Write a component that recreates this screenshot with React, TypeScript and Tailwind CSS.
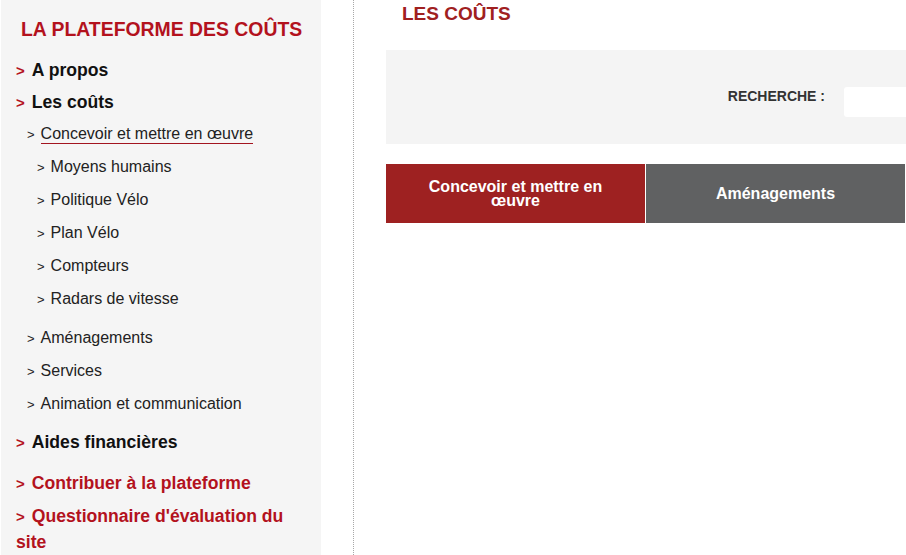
import React from 'react';

const subItems = ['Moyens humains', 'Politique Vélo', 'Plan Vélo', 'Compteurs', 'Radars de vitesse'];
const sections = ['Aménagements', 'Services', 'Animation et communication'];

function Arrow({ bold = false, red = false }: { bold?: boolean; red?: boolean }) {
  return (
    <span className={`${bold ? 'text-[15px] font-bold mr-[7px]' : 'text-[13px] mr-[6px]'} ${red ? 'text-[#b3121d]' : 'text-[#222]'} leading-none`}>
      &gt;
    </span>
  );
}

export default function App() {
  return (
    <div className="flex h-[555px] w-[906px] overflow-hidden bg-white font-['Liberation_Sans',Arial,sans-serif]">
      {/* Sidebar */}
      <aside className="ml-px w-[320px] shrink-0 bg-[#f5f5f5] pr-[20px]">
        <h2 className="whitespace-nowrap pt-[17px] pl-[20px] text-[19.4px] font-bold leading-[24px] text-[#b3121d]">
          LA PLATEFORME DES COÛTS
        </h2>

        <ul className="mt-[13px]">
          <li className="pl-[15px] text-[17.6px] font-bold leading-[32px] text-[#111]">
            <Arrow bold red />A propos
          </li>
          <li className="pl-[15px] text-[17.6px] font-bold leading-[32px] text-[#111]">
            <Arrow bold red />Les coûts
          </li>
          <li className="pl-[26px] text-[16px] leading-[32px] text-[#222]">
            <Arrow />
            <span className="border-b border-[#a3141f] pb-px">Concevoir et mettre en œuvre</span>
          </li>
          {subItems.map((item) => (
            <li key={item} className="pl-[36px] text-[16px] leading-[33px] text-[#222]">
              <Arrow />
              {item}
            </li>
          ))}
          <li className="mt-[6px]">
            <ul>
              {sections.map((item) => (
                <li key={item} className="pl-[26px] text-[16px] leading-[33px] text-[#222]">
                  <Arrow />
                  {item}
                </li>
              ))}
            </ul>
          </li>
          <li className="mt-[6px] pl-[15px] text-[17.6px] font-bold leading-[32px] text-[#111]">
            <Arrow bold red />Aides financières
          </li>
          <li className="mt-[9px] pl-[15px] text-[17.6px] font-bold leading-[32px] text-[#b3121d]">
            <Arrow bold red />Contribuer à la plateforme
          </li>
          <li className="mt-[4px] pl-[15px] text-[17.6px] font-bold leading-[26px] text-[#b3121d]">
            <Arrow bold red />Questionnaire d'évaluation du site
          </li>
        </ul>
      </aside>

      {/* Main */}
      <main className="ml-[32px] shrink-0 border-l border-dotted border-[#a8a8a8] pl-[32px]">
        <div className="w-[779px]">
          <h1 className="mt-[2px] pl-[16px] text-[19px] font-bold leading-[24px] text-[#a0201f]">LES COÛTS</h1>

          <div className="mt-[24px] flex h-[94px] items-center justify-end bg-[#f4f4f4] pr-[21px]">
            <span className="-mt-[2px] text-[14px] font-bold text-[#333]">RECHERCHE :</span>
            <input
              type="text"
              className="ml-[19px] mt-[10px] h-[30px] w-[300px] rounded-[3px] bg-white outline-none"
            />
          </div>

          <div className="mt-[20px] flex h-[59px] gap-px">
            <div className="flex w-[259px] items-center justify-center bg-[#9e2121] px-[20px] text-center text-[16px] font-bold leading-[14px] text-white">
              Concevoir et mettre en œuvre
            </div>
            <div className="flex w-[259px] items-center justify-center bg-[#606162] px-[20px] text-center text-[16px] font-bold leading-[14px] text-white">
              Aménagements
            </div>
            <div className="flex w-[259px] items-center justify-center bg-[#606162] px-[20px] text-center text-[16px] font-bold leading-[14px] text-white">
              Services
            </div>
          </div>
        </div>
      </main>
    </div>
  );
}
